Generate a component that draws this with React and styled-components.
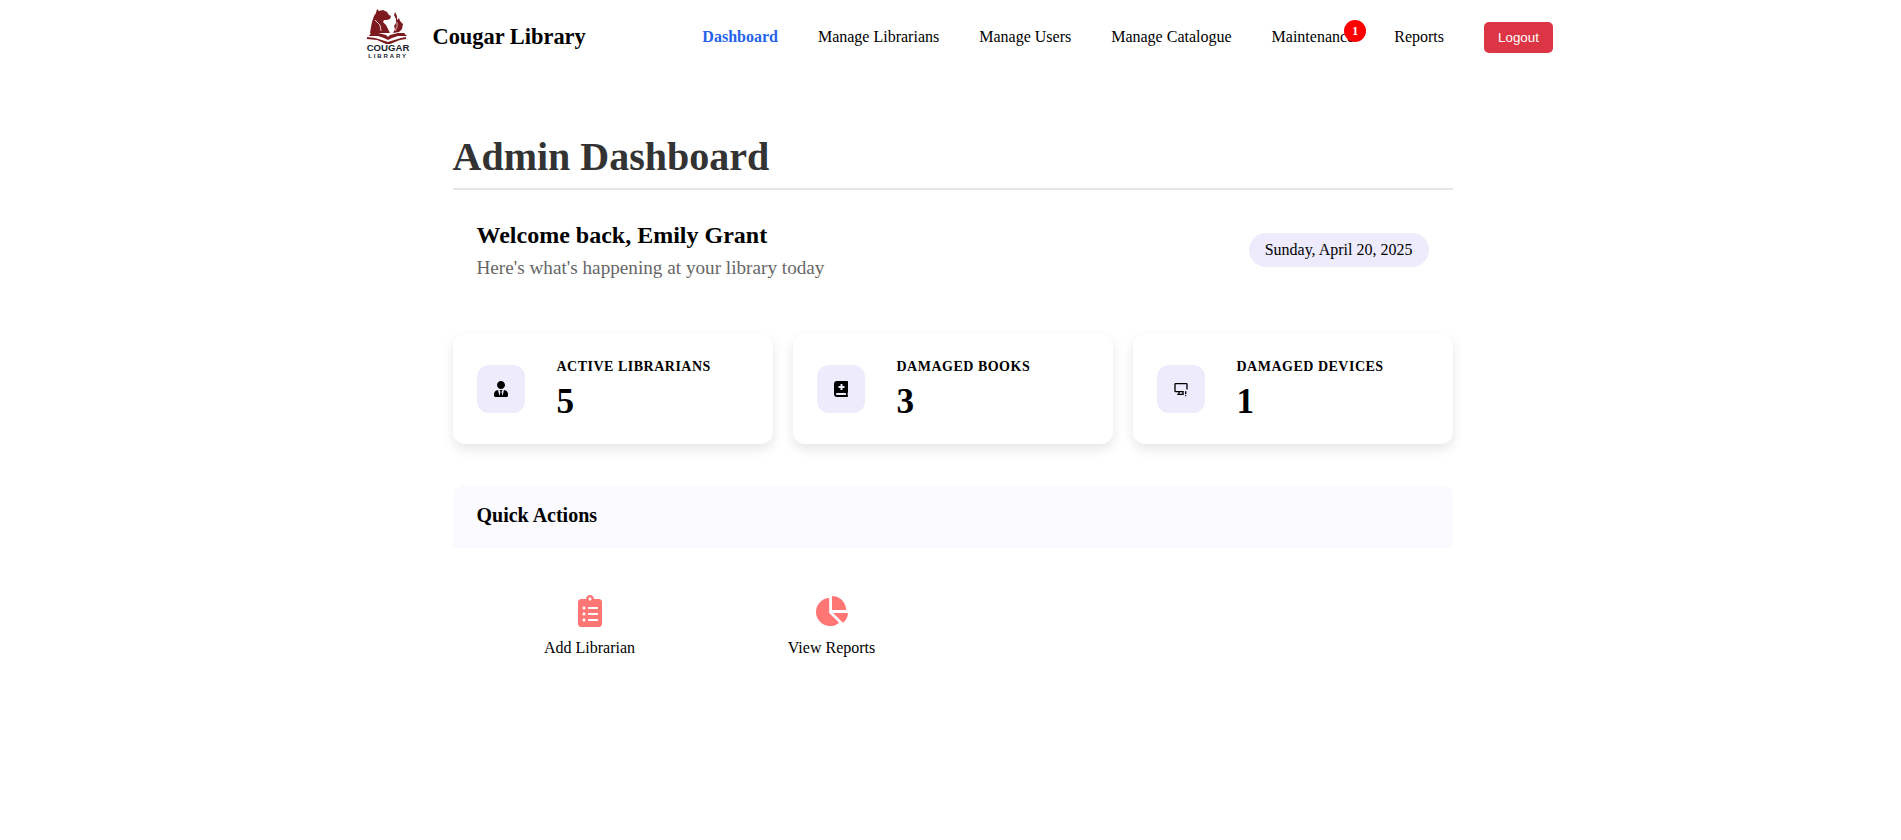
import { createGlobalStyle, styled } from "styled-components";
import { FaUserTie, FaBookMedical, FaClipboardList, FaChartPie } from "react-icons/fa";
import { TbDeviceDesktopExclamation } from "react-icons/tb";

const GlobalStyle = createGlobalStyle`
  html, body {
    margin: 0;
    padding: 0;
    background: #fff;
    font-family: "Liberation Serif", "Times New Roman", serif;
    color: #000;
  }
`;

const Navbar = styled.nav`
  width: 1188.5px;
  height: 74px;
  margin-left: 364.5px;
  display: flex;
  align-items: center;
  justify-content: space-between;
`;

const Brand = styled.div`
  display: flex;
  align-items: center;
  gap: 20px;
`;

const LogoBox = styled.div`
  width: 48px;
  height: 60px;
  display: flex;
`;

const BrandName = styled.span`
  font-size: 22.4px;
  font-weight: bold;
`;

const NavLinks = styled.div`
  display: flex;
  align-items: center;
  gap: 40px;
`;

const NavLink = styled.a`
  position: relative;
  font-size: 16px;
  color: ${(props) => (props.$active ? "#2563eb" : "#000")};
  font-weight: ${(props) => (props.$active ? "bold" : "normal")};
`;

const Badge = styled.span`
  position: absolute;
  top: -8px;
  right: -12px;
  width: 22px;
  height: 22px;
  border-radius: 50%;
  background: #ff0000;
  color: #fff;
  font-size: 12px;
  font-weight: bold;
  display: flex;
  align-items: center;
  justify-content: center;
`;

const LogoutButton = styled.button`
  width: 69px;
  height: 31px;
  border: none;
  border-radius: 5px;
  background: #dc3545;
  color: #fff;
  font-family: "Liberation Sans", Arial, sans-serif;
  font-size: 13.33px;
  padding: 0;
`;

const Main = styled.main`
  width: 1000px;
  margin: 0 0 0 452.5px;
  padding-top: 60px;
`;

const PageTitle = styled.h1`
  margin: 0;
  font-size: 40px;
  line-height: 46px;
  font-weight: bold;
  color: #333;
  padding-bottom: 8px;
  border-bottom: 2px solid #e5e5ea;
`;

const WelcomeRow = styled.section`
  display: flex;
  align-items: center;
  justify-content: space-between;
  padding: 31px 24px;
  margin-bottom: 24px;
`;

const WelcomeName = styled.h2`
  margin: 0 0 8px;
  font-size: 24px;
  line-height: 28px;
  font-weight: bold;
`;

const WelcomeText = styled.p`
  margin: 0;
  font-size: 19.2px;
  line-height: 22px;
  color: #666;
`;

const DatePill = styled.div`
  padding: 8px 16px;
  border-radius: 20px;
  background: #edebfc;
  font-size: 16px;
  line-height: 18px;
`;

const StatGrid = styled.div`
  display: grid;
  grid-template-columns: repeat(3, 1fr);
  gap: 20px;
  margin-bottom: 41px;
`;

const StatCard = styled.div`
  height: 110px;
  box-sizing: border-box;
  padding: 0 24px;
  display: flex;
  align-items: center;
  gap: 32px;
  background: #fff;
  border-radius: 12px;
  box-shadow: 0 5px 12px rgba(0, 0, 0, 0.1);
`;

const StatIcon = styled.div`
  width: 48px;
  height: 48px;
  border-radius: 12px;
  background: #edebfc;
  display: flex;
  align-items: center;
  justify-content: center;
  font-size: 16px;
`;

const StatText = styled.div`
  padding-top: 2px;
`;

const StatLabel = styled.div`
  font-size: 14px;
  line-height: 16px;
  font-weight: bold;
  letter-spacing: 0.5px;
  text-transform: uppercase;
  margin-bottom: 7px;
`;

const StatValue = styled.div`
  font-size: 35.2px;
  line-height: 40px;
  font-weight: bold;
`;

const QuickHeader = styled.div`
  height: 63px;
  box-sizing: border-box;
  padding: 0 24px 2px;
  display: flex;
  align-items: center;
  background: #fafaff;
  border-radius: 12px 12px 0 0;
`;

const QuickTitle = styled.h3`
  margin: 0;
  font-size: 20px;
  font-weight: bold;
`;

const ActionRow = styled.div`
  display: flex;
  padding: 47px 0 0 24px;
`;

const ActionItem = styled.a`
  width: 226px;
  margin-right: 16px;
  display: flex;
  flex-direction: column;
  align-items: center;
  gap: 12px;
  font-size: 16px;
  color: #000;
  svg {
    color: #ff7675;
    font-size: 32px;
  }
`;

function CougarLogo() {
  return (
    <svg width="48" height="60" viewBox="0 0 48 60">
      {/* cougar */}
      <path
        fill="#7d1a20"
        d="M12 2l2 2 4-1 4 2 2 3 2 1-1 3-3 1-3 0-1 2 3 3 2 4 2 4-20 0 1-6 1-5 2-6 2-3z"
      />
      <path fill="none" stroke="#fff" strokeWidth="0.8" d="M10 13l5 5 1 6" />
      {/* flames */}
      <path
        fill="#7d1a20"
        d="M30 5l2 4 0 4 2-2 1 3 3 3-1 5-3 3-6 1 2-4-1-3 2-3 0-4-2-4z"
      />
      <path fill="none" stroke="#fff" strokeWidth="0.7" d="M32 15l0 5-2 4" />
      {/* open book */}
      <path
        fill="#7d1a20"
        d="M6 26l7 0 8 2 2 2 2-2 8-2 6 0 3 3-9 0-6 2-4 2-4-2-6-2-9 0z"
      />
      <path
        fill="#7d1a20"
        d="M2 30l8 1 10 3 3 1 3-1 10-3 5-1 0 2-6 1-10 4-4 0-9-4-10-1z"
      />
      <text
        x="23"
        y="44"
        textAnchor="middle"
        fontFamily="Liberation Sans, Arial, sans-serif"
        fontWeight="bold"
        fontSize="9.6"
        fill="#1d2430"
      >
        COUGAR
      </text>
      <text
        x="23"
        y="50.5"
        textAnchor="middle"
        fontFamily="Liberation Sans, Arial, sans-serif"
        fontWeight="bold"
        fontSize="6"
        letterSpacing="1.9"
        fill="#1d2430"
      >
        LIBRARY
      </text>
    </svg>
  );
}

const stats = [
  { label: "Active Librarians", value: 5, icon: <FaUserTie /> },
  { label: "Damaged Books", value: 3, icon: <FaBookMedical /> },
  { label: "Damaged Devices", value: 1, icon: <TbDeviceDesktopExclamation /> },
];

export default function App() {
  return (
    <>
      <GlobalStyle />
      <Navbar>
        <Brand>
          <LogoBox>
            <CougarLogo />
          </LogoBox>
          <BrandName>Cougar Library</BrandName>
        </Brand>
        <NavLinks>
          <NavLink $active>Dashboard</NavLink>
          <NavLink>Manage Librarians</NavLink>
          <NavLink>Manage Users</NavLink>
          <NavLink>Manage Catalogue</NavLink>
          <NavLink>
            Maintenance
            <Badge>1</Badge>
          </NavLink>
          <NavLink>Reports</NavLink>
          <LogoutButton>Logout</LogoutButton>
        </NavLinks>
      </Navbar>
      <Main>
        <PageTitle>Admin Dashboard</PageTitle>
        <WelcomeRow>
          <div>
            <WelcomeName>Welcome back, Emily Grant</WelcomeName>
            <WelcomeText>Here's what's happening at your library today</WelcomeText>
          </div>
          <DatePill>Sunday, April 20, 2025</DatePill>
        </WelcomeRow>
        <StatGrid>
          {stats.map((stat) => (
            <StatCard key={stat.label}>
              <StatIcon>{stat.icon}</StatIcon>
              <StatText>
                <StatLabel>{stat.label}</StatLabel>
                <StatValue>{stat.value}</StatValue>
              </StatText>
            </StatCard>
          ))}
        </StatGrid>
        <QuickHeader>
          <QuickTitle>Quick Actions</QuickTitle>
        </QuickHeader>
        <ActionRow>
          <ActionItem>
            <FaClipboardList />
            Add Librarian
          </ActionItem>
          <ActionItem>
            <FaChartPie />
            View Reports
          </ActionItem>
        </ActionRow>
      </Main>
    </>
  );
}
